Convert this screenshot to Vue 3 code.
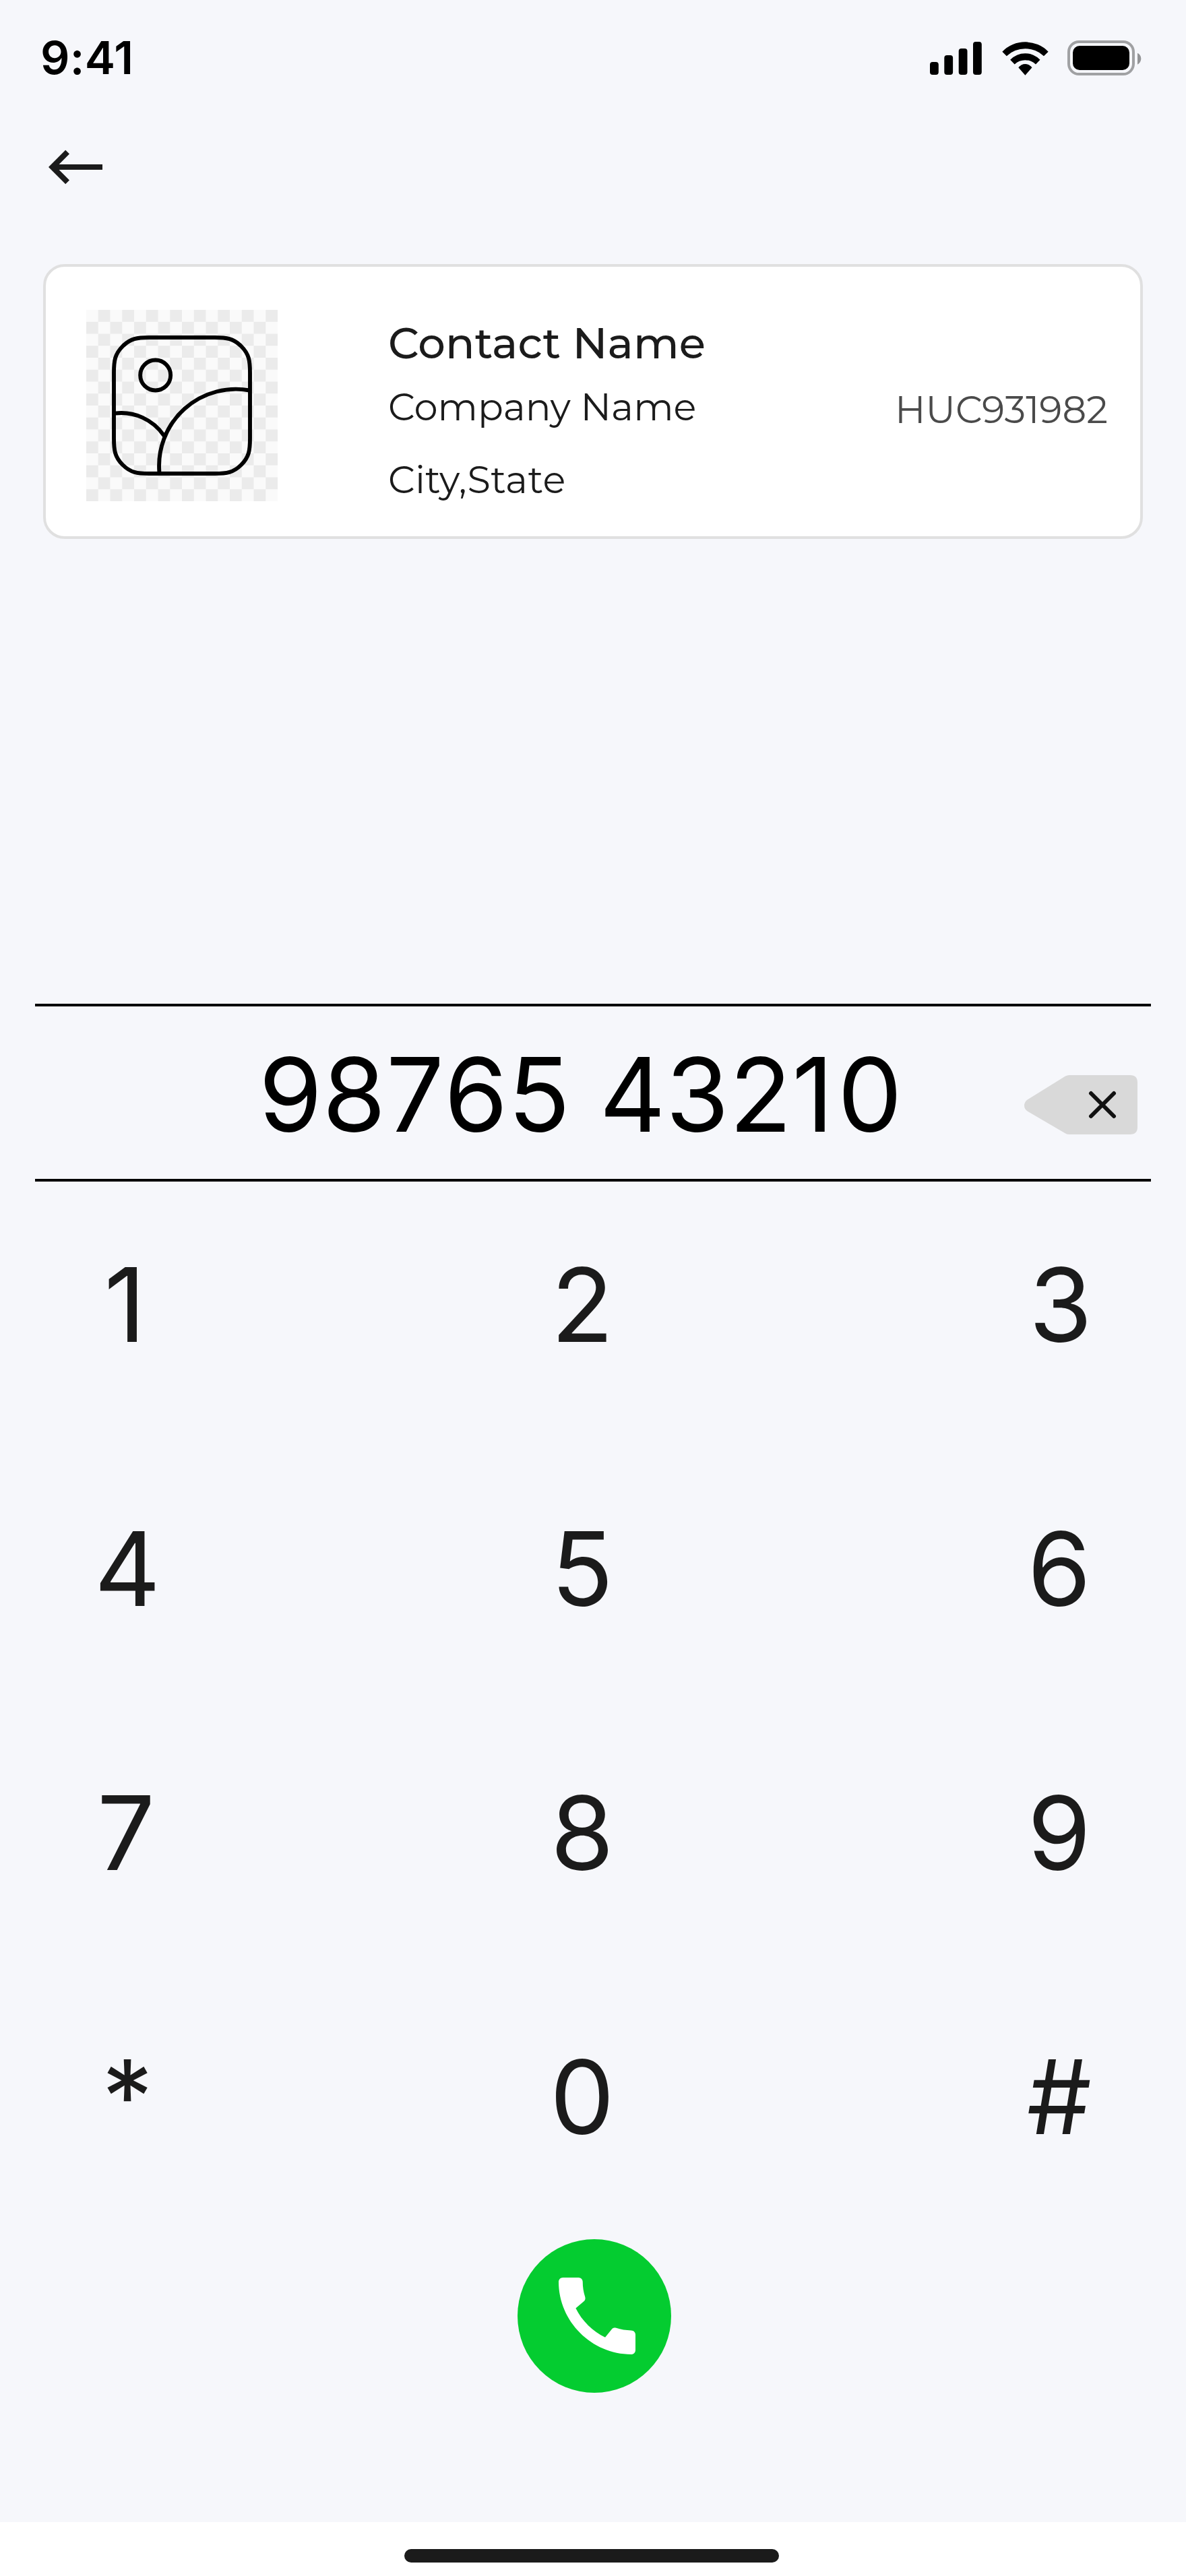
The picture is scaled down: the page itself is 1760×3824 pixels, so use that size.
<script setup>
const keys = ['1', '2', '3', '4', '5', '6', '7', '8', '9', '*', '0', '#']
</script>

<template>
  <div class="screen">
    <header class="status">
      <span class="time">9:41</span>
      <div class="indicators">
        <svg class="signal" width="77" height="49" viewBox="0 0 77 49">
          <rect x="0" y="30" width="12.8" height="19" rx="4" />
          <rect x="21.3" y="20" width="12.8" height="29" rx="4" />
          <rect x="42.7" y="10" width="12.8" height="39" rx="4" />
          <rect x="64" y="0" width="12.8" height="49" rx="4" />
        </svg>
        <svg class="wifi" width="69" height="50" viewBox="440 96 207 150">
          <path d="M441 140A143.7 143.7 0 0 1 646 140L626 159.5A120.9 120.9 0 0 0 460.5 159.5Z" />
          <path d="M476.5 176A91.9 91.9 0 0 1 609.5 176L590 196.5A67.6 67.6 0 0 0 496 196.5Z" />
          <path d="M513 211A37 37 0 0 1 573.5 211L543.3 245Z" />
        </svg>
        <svg class="battery" width="110" height="52" viewBox="0 0 110 52">
          <rect x="2" y="2" width="96" height="48" rx="15.2" fill="none" stroke="#000" stroke-opacity=".35" stroke-width="4" />
          <rect x="8" y="8" width="84" height="36" rx="10" />
          <path d="M104 18.7C107.2 20.1 109.3 23.2 109.3 27C109.3 30.8 107.2 34.2 104 35.7Z" fill-opacity=".4" />
        </svg>
      </div>
    </header>

    <nav class="nav">
      <svg width="80" height="52" viewBox="0 0 80 52" fill="#1b1b1b">
        <path d="M80 22H15.6L31 6.4L25.2 .7L0 26L25.2 51.3L31 45.6L15.6 30H80Z" />
      </svg>
    </nav>

    <section class="card">
      <svg class="thumb" width="284" height="284" viewBox="0 0 852 852">
        <defs>
          <pattern id="checker" width="106.5" height="106.5" patternUnits="userSpaceOnUse">
            <rect width="106.5" height="106.5" fill="#fafafa" />
            <rect x="53.25" width="53.25" height="53.25" fill="#ebebeb" />
            <rect y="53.25" width="53.25" height="53.25" fill="#ebebeb" />
          </pattern>
        </defs>
        <rect width="852" height="852" fill="url(#checker)" />
        <g fill="none" stroke="#000" stroke-width="17.7" stroke-linecap="round">
          <path d="M280 123H572C625 123 655 127 690 162C725 197 729 227 729 280V572C729 625 725 655 690 690C655 725 625 729 572 729H280C227 729 197 725 162 690C127 655 123 625 123 572V280C123 227 127 197 162 162C197 127 227 123 280 123Z" />
          <circle cx="308" cy="291" r="67.5" />
          <path d="M325 719A342 342 0 0 1 727 358.500" />
          <path d="M127 461A230 230 0 0 1 346 560" />
        </g>
      </svg>
      <div class="details">
        <div class="name">Contact Name</div>
        <div class="company">Company Name</div>
        <div class="city">City,State</div>
      </div>
      <div class="code">HUC931982</div>
    </section>

    <section class="entry">
      <span class="number">98765 432<span class="one">1</span>0</span>
      <svg class="erase" width="168" height="88" viewBox="0 0 168 88">
        <path d="M61 1.6Q63.500 0 67 0H157Q168 0 168 11V77Q168 88 157 88H67Q63.500 88 61 86.400L5 53.700Q0 50.500 0 45.200Q0 39.800 5 36.300Z" fill="#d9d9d9" />
        <path d="M99 27L133 61M133 27L99 61" stroke="#111" stroke-width="6" stroke-linecap="round" />
      </svg>
    </section>

    <section class="keypad">
      <span v-for="key in keys" :key="key" class="key">{{ key }}</span>
    </section>

    <div class="call">
      <svg width="152" height="152" viewBox="0 0 24 24" fill="#fff">
        <path d="M20.010 15.380c-1.230 0-2.420-.2-3.530-.56-.35-.12-.74-.03-1.010.24l-1.570 1.970c-2.830-1.350-5.480-3.900-6.890-6.830l1.950-1.660c.27-.28.35-.67.24-1.020-.37-1.110-.56-2.300-.56-3.530 0-.54-.45-.99-.99-.99H4C3.450 3 3 3.450 3 4 3 13.280 10.730 21 20.010 21c.55 0 .99-.45.99-1v-3.630c0-.54-.45-.99-.99-.99z" />
      </svg>
    </div>

    <footer class="home"><div class="handle"></div></footer>
  </div>
</template>

<style>
body {
  margin: 0;
  background: #f6f7fb;
}
</style>

<style scoped>
.screen {
  display: flex;
  flex-direction: column;
  width: 1760px;
  height: 3824px;
  overflow: hidden;
  background: #f6f7fb;
  font-family: Inter, "Liberation Sans", sans-serif;
}
svg {
  display: block;
  flex: none;
}
.status {
  display: flex;
  justify-content: space-between;
  height: 222px;
  flex: none;
}
.time {
  margin: 44px 0 0 60px;
  font-size: 68px;
  font-weight: 600;
  line-height: 82px;
  height: 82px;
  letter-spacing: 0.3px;
  color: #000;
}
.indicators {
  display: flex;
  height: 52px;
  margin: 60px 66px 0 0;
}
.signal {
  margin: 2px 29.7px 0 0;
}
.wifi {
  margin: 2px 28.3px 0 0;
}
.nav {
  height: 170px;
  padding-left: 72px;
  box-sizing: border-box;
  flex: none;
}
.card {
  box-sizing: border-box;
  display: flex;
  width: 1632px;
  height: 408px;
  margin-left: 64px;
  padding: 64px 0 0 60px;
  border: 4px solid #e0e0e0;
  border-radius: 32px;
  background: #fff;
  flex: none;
  font-family: Montserrat, Lato, sans-serif;
  color: #1b1b1b;
  white-space: nowrap;
}
.details {
  width: 752px;
  margin-left: 164px;
}
.name {
  height: 78px;
  margin-top: 10px;
  line-height: 78px;
  font-size: 64px;
  font-weight: 500;
  letter-spacing: 0.1px;
}
.company,
.city {
  height: 68px;
  line-height: 68px;
  font-size: 56px;
}
.company {
  margin-top: 22px;
}
.city {
  margin-top: 40px;
  letter-spacing: 0.3px;
}
.code {
  height: 68px;
  margin-top: 114px;
  line-height: 68px;
  font-size: 56px;
  color: #4a4a4a;
}
.entry {
  box-sizing: border-box;
  display: flex;
  justify-content: space-between;
  width: 1656px;
  height: 264px;
  margin: 690px 0 0 52px;
  padding: 0 20px 0 332px;
  border-top: 4px solid #000;
  border-bottom: 4px solid #000;
  flex: none;
}
.number {
  margin-top: 39px;
  font-size: 152px;
  line-height: 184px;
  font-kerning: none;
  letter-spacing: 0.3px;
  color: #000;
  white-space: nowrap;
}
.one {
  letter-spacing: 6px;
}
.erase {
  margin-top: 102px;
}
.keypad {
  display: grid;
  grid-template-columns: 200px 1150px 266px;
  grid-auto-rows: 184px;
  row-gap: 208px;
  margin: 91px 0 0 89px;
  color: #1b1b1b;
}
.key {
  font-size: 152px;
  line-height: 184px;
  text-align: center;
}
.key:nth-child(1) {
  padding-right: 7px;
}
.key:nth-child(3) {
  padding-left: 4px;
}
.key:nth-child(7) {
  padding-right: 4px;
}
.call {
  display: flex;
  align-items: center;
  justify-content: center;
  box-sizing: border-box;
  width: 228px;
  height: 228px;
  padding-left: 7px;
  margin: 119px 0 0 768px;
  border-radius: 50%;
  background: #04cc30;
  flex: none;
}
.home {
  display: flex;
  justify-content: center;
  box-sizing: border-box;
  height: 80px;
  margin-top: auto;
  padding: 40px 4px 0 0;
  background: #fff;
  flex: none;
}
.handle {
  width: 556px;
  height: 20px;
  border-radius: 10px;
  background: #1b1b1b;
}
</style>
